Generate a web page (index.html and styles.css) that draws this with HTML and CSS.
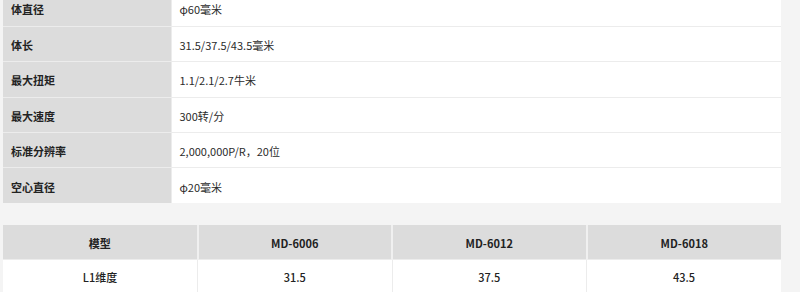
FILE: index.html
```html
<!DOCTYPE html>
<html lang="zh-CN">
<head>
<meta charset="utf-8">
<link rel="stylesheet" href="styles.css">
</head>
<body>
<div class="page">
  <table class="spec">
    <tr><th>体直径</th><td>φ60毫米</td></tr>
    <tr><th>体长</th><td>31.5/37.5/43.5毫米</td></tr>
    <tr><th>最大扭矩</th><td>1.1/2.1/2.7牛米</td></tr>
    <tr><th>最大速度</th><td>300转/分</td></tr>
    <tr><th>标准分辨率</th><td>2,000,000P/R，20位</td></tr>
    <tr><th>空心直径</th><td>φ20毫米</td></tr>
  </table>
  <table class="models">
    <tr><th>模型</th><th>MD-6006</th><th>MD-6012</th><th>MD-6018</th></tr>
    <tr><td>L1维度</td><td>31.5</td><td>37.5</td><td>43.5</td></tr>
  </table>
</div>
</body>
</html>
```
FILE: styles.css
```css
html, body {
  margin: 0;
  padding: 0;
  background: #f4f4f4;
}
body {
  font-family: "Noto Sans CJK SC", "Noto Sans", sans-serif;
  font-size: 11px;
  color: #2b2b2b;
}
.page {
  margin-top: -9px;
  padding: 0 19px 0 3px;
  display: flex;
  flex-direction: column;
  gap: 22px;
}
table {
  width: 100%;
  border-collapse: collapse;
  background: #fff;
}
.spec th, .spec td {
  height: 35.4px;
  border: 1px solid #ececec;
  text-align: left;
  padding: 2px 0 0 8px;
  box-sizing: border-box;
}
.spec th {
  width: 168px;
  background: #dcdcdc;
  font-weight: bold;
  color: #222;
}
.spec tr:first-child th, .spec tr:first-child td { border-top: 0; }
.spec th { border-left: 0; }
.spec td { border-right: 0; padding-left: 8px; }
.spec tr:last-child th, .spec tr:last-child td { border-bottom: 0; }
.models { table-layout: fixed; }
.models th, .models td {
  height: 34px;
  border: 1px solid #ececec;
  text-align: center;
  padding: 1px 0 0;
  box-sizing: border-box;
}
.models td { font-weight: 500; color: #222; }
.models th {
  background: #dcdcdc;
  font-weight: bold;
  color: #222;
  border-width: 0 2px;
  border-color: #f0f0f0;
}
.models th:first-child, .models td:first-child { border-left: 0; }
.models th:last-child, .models td:last-child { border-right: 0; }
.models tr:first-child th { border-top: 0; }
```
